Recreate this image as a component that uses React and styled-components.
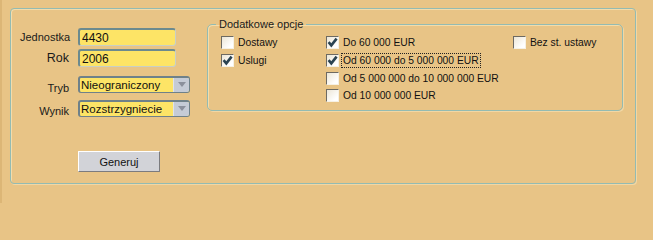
import React from "react";
import styled, { createGlobalStyle } from "styled-components";

const GlobalStyle = createGlobalStyle`
  html, body {
    margin: 0;
    padding: 0;
    height: 203px;
    overflow: hidden;
    background: #e8c486;
  }
  body {
    font-family: "Liberation Sans", Arial, sans-serif;
    font-size: 11px;
    color: #111;
  }
`;

const Page = styled.div`
  width: 653px;
  height: 203px;
  box-sizing: border-box;
  padding: 8px 0 0 8px;
  border-left: 2px solid #dcb676;
  background: #e8c486;
`;

const Frame = styled.div`
  width: 626px;
  height: 176px;
  box-sizing: border-box;
  border: 1px solid #93bbb2;
  border-radius: 4px;
  box-shadow: inset 1px 1px 0 #f4dcaa, 1px 1px 0 #f2d7a4;
  display: flex;
  align-items: flex-start;
`;

const FormColumn = styled.div`
  width: 196px;
  box-sizing: border-box;
  padding: 19px 0 0 9px;
  display: flex;
  flex-direction: column;
`;

const FieldRow = styled.div`
  display: flex;
  align-items: center;
  margin-top: ${(p) => p.$gap || 0}px;
`;

const Label = styled.label`
  width: 49px;
  margin-right: 9px;
  text-align: right;
  font-size: ${(p) => p.$size || 11}px;
  padding-top: ${(p) => p.$drop || 0}px;
  white-space: nowrap;
  color: #1a1a1a;
`;

const TextInput = styled.input`
  width: 98px;
  height: 18px;
  box-sizing: border-box;
  margin: 0;
  padding: 1px 2px 0;
  font-family: "Liberation Sans", Arial, sans-serif;
  font-size: 12px;
  color: #111;
  background: #fde466;
  border: 1px solid #c8cfc6;
  border-top: 2px solid #6c8a8e;
  border-left: 2px solid #6c8a8e;
  border-radius: 3px;
  outline: none;
`;

const SelectShell = styled.div`
  width: 112px;
  height: 17px;
  box-sizing: border-box;
  display: flex;
  border: 1px solid #6f8189;
  border-top-width: 2px;
  border-left-width: 2px;
  border-radius: 3px;
  background: #fde466;
  overflow: hidden;
`;

const SelectField = styled.select`
  flex: 1;
  min-width: 0;
  margin: 0;
  padding: 0 0 0 1px;
  border: none;
  appearance: none;
  background: transparent;
  font-family: "Liberation Sans", Arial, sans-serif;
  font-size: 11.5px;
  color: #111;
  outline: none;
`;

const ArrowPart = styled.span`
  width: 15px;
  display: flex;
  align-items: center;
  justify-content: center;
  background: #c5cbd6;
  border-left: 1px solid #dfe3ea;
`;

const GroupBox = styled.fieldset`
  margin: 9px 0 0 0;
  width: 416px;
  height: 93px;
  box-sizing: border-box;
  padding: 0 0 0 8px;
  border: 1px solid #93bbb2;
  border-radius: 5px;
  box-shadow: inset 1px 1px 0 #f4dcaa, 1px 1px 0 #f2d7a4;
`;

const Legend = styled.legend`
  padding: 0 3px;
  font-size: 11px;
  color: #1a1a1a;
`;

const OptionGrid = styled.div`
  margin: 4px 0 0 5px;
  display: grid;
  grid-template-columns: 105px 187px 1fr;
  grid-auto-rows: 17.7px;
  align-items: center;
`;

const OptionItem = styled.label`
  display: flex;
  align-items: center;
  gap: 2px;
  grid-column: ${(p) => p.$col};
  grid-row: ${(p) => p.$row};
  font-size: 10.3px;
  white-space: nowrap;
`;

const Box = styled.span`
  width: 13px;
  height: 13px;
  box-sizing: border-box;
  flex: none;
  display: flex;
  align-items: center;
  justify-content: center;
  border: 1px solid #f6f1e4;
  border-top-color: #6d6a62;
  border-left-color: #6d6a62;
  background: linear-gradient(135deg, #ece6d6 0%, #ffffff 80%);
`;

const OptionText = styled.span`
  padding: 1px 1px;
  border: 1px dotted ${(p) => (p.$focused ? "#222" : "transparent")};
`;

const ActionButton = styled.button`
  margin: 34px 0 0 58px;
  width: 82px;
  height: 21px;
  box-sizing: border-box;
  padding: 0;
  font-family: "Liberation Sans", Arial, sans-serif;
  font-size: 11px;
  color: #111;
  background: #d2d3d8;
  border: 1px solid #7b7b7e;
  border-top-color: #ffffff;
  border-left-color: #ffffff;
  border-radius: 1px;
`;

function Check({ checked }) {
  return (
    <Box>
      {checked && (
        <svg width="11" height="11" viewBox="0 0 11 11">
          <path
            d="M1.6 5.2 L4.3 8.4 L9.6 1.6"
            fill="none"
            stroke="#2b4351"
            strokeWidth="2.6"
            strokeLinejoin="miter"
          />
        </svg>
      )}
    </Box>
  );
}

function Option({ col, row, checked, focused, children }) {
  return (
    <OptionItem $col={col} $row={row}>
      <Check checked={checked} />
      <OptionText $focused={focused}>{children}</OptionText>
    </OptionItem>
  );
}

function Dropdown({ value }) {
  return (
    <SelectShell>
      <SelectField defaultValue={value}>
        <option>{value}</option>
      </SelectField>
      <ArrowPart>
        <svg width="8" height="5" viewBox="0 0 8 5">
          <path d="M0 0 H8 L4 5 Z" fill="#8b909c" />
        </svg>
      </ArrowPart>
    </SelectShell>
  );
}

export default function App() {
  return (
    <>
      <GlobalStyle />
      <Page>
        <Frame>
          <FormColumn>
            <FieldRow>
              <Label>Jednostka</Label>
              <TextInput defaultValue="4430" />
            </FieldRow>
            <FieldRow $gap={3}>
              <Label $size={12.5}>Rok</Label>
              <TextInput defaultValue="2006" />
            </FieldRow>
            <FieldRow $gap={7}>
              <Label $drop={8}>Tryb</Label>
              <Dropdown value="Nieograniczony" />
            </FieldRow>
            <FieldRow $gap={5}>
              <Label $drop={6}>Wynik</Label>
              <Dropdown value="Rozstrzygniecie" />
            </FieldRow>
            <ActionButton>Generuj</ActionButton>
          </FormColumn>

          <GroupBox>
            <Legend>Dodatkowe opcje</Legend>
            <OptionGrid>
              <Option col={1} row={1}>Dostawy</Option>
              <Option col={1} row={2} checked>Uslugi</Option>
              <Option col={2} row={1} checked>Do 60 000 EUR</Option>
              <Option col={2} row={2} checked focused>
                Od 60 000 do 5 000 000 EUR
              </Option>
              <Option col={2} row={3}>Od 5 000 000 do 10 000 000 EUR</Option>
              <Option col={2} row={4}>Od 10 000 000 EUR</Option>
              <Option col={3} row={1}>Bez st. ustawy</Option>
            </OptionGrid>
          </GroupBox>
        </Frame>
      </Page>
    </>
  );
}
